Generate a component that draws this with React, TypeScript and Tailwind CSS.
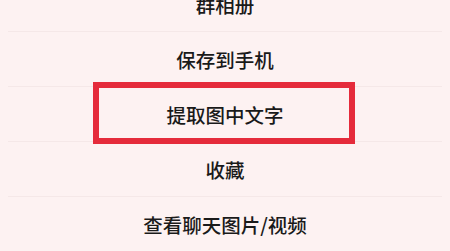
const items = ["群相册", "保存到手机", "提取图中文字", "收藏", "查看聊天图片/视频"];

export default function App() {
  return (
    <div
      className="w-[450px] h-[251px] overflow-hidden bg-[#fdf2f2] text-[#1a1a1a]"
      style={{ fontFamily: '"Noto Sans CJK SC", "Noto Sans", sans-serif' }}
    >
      <div className="-mt-[23px] flex flex-col">
        {items.map((label, i) => (
          <div key={label} className="relative flex flex-col">
            <div className="h-[54px] pt-[2px] flex items-center justify-center text-[19.5px] font-medium leading-none">
              {label}
            </div>
            <div className="h-px mx-2 bg-[#f5e8e8]" />
            {i === 2 && (
              <div className="absolute left-[93px] top-[-5px] w-[262px] h-[62px] border-[6px] border-[#e52b3b]" />
            )}
          </div>
        ))}
      </div>
    </div>
  );
}
